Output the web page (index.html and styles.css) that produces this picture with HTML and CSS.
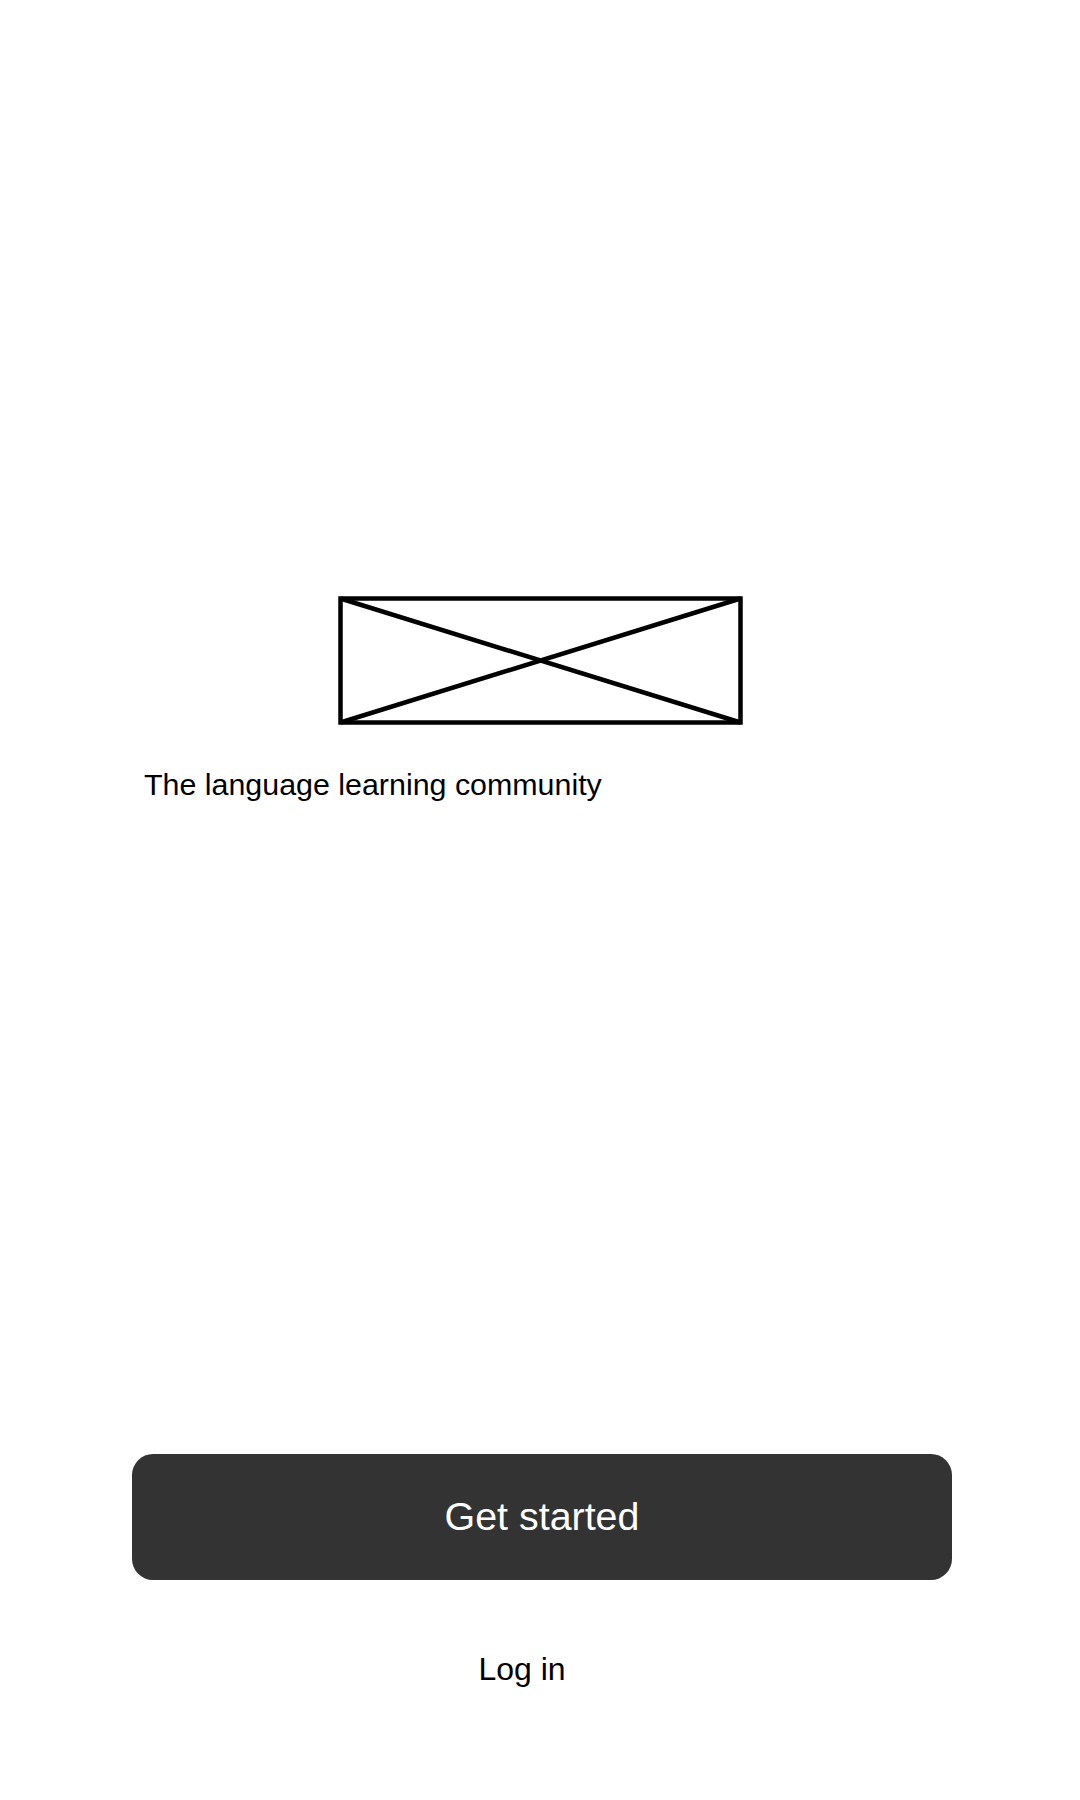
FILE: index.html
```html
<!DOCTYPE html>
<html lang="en">
<head>
<meta charset="utf-8">
<title>Welcome</title>
<link rel="stylesheet" href="styles.css">
</head>
<body>
<main class="screen">
  <section class="hero">
    <svg class="logo" width="405" height="129" viewBox="0 0 405 129" aria-label="Logo placeholder">
      <rect x="2.5" y="2.5" width="400" height="124" fill="none" stroke="#000" stroke-width="4.5"/>
      <line x1="2.5" y1="2.5" x2="402.5" y2="126.5" stroke="#000" stroke-width="4.5"/>
      <line x1="2.5" y1="126.5" x2="402.5" y2="2.5" stroke="#000" stroke-width="4.5"/>
    </svg>
    <p class="tagline">The language learning community</p>
  </section>
  <section class="actions">
    <button class="primary" type="button">Get started</button>
    <a class="login" href="#">Log in</a>
  </section>
</main>
</body>
</html>
```

FILE: styles.css
```css
html, body {
  margin: 0;
  padding: 0;
  background: #ffffff;
}

body {
  font-family: "Liberation Sans", Arial, sans-serif;
  color: #000;
}

.screen {
  box-sizing: border-box;
  height: 1800px;
  display: flex;
  flex-direction: column;
  padding: 596px 0 112px;
}

.hero {
  display: flex;
  flex-direction: column;
}

.logo {
  display: block;
  margin: 0 auto;
}

.tagline {
  margin: 42px 0 0;
  padding-left: 144px;
  font-size: 30.4px;
  line-height: 34px;
  color: #000;
}

.actions {
  margin-top: auto;
  display: flex;
  flex-direction: column;
  align-items: center;
}

.primary {
  box-sizing: border-box;
  align-self: stretch;
  margin: 0 128px 0 132px;
  height: 126px;
  border: none;
  border-radius: 21px;
  background: #333333;
  color: #ffffff;
  font-family: "Liberation Sans", Arial, sans-serif;
  font-size: 39.4px;
  display: flex;
  align-items: center;
  justify-content: center;
  padding: 0 0 2px;
}

.login {
  margin-top: 70px;
  margin-right: 36px;
  font-size: 32px;
  line-height: 38px;
  color: #000;
  text-decoration: none;
}
```
